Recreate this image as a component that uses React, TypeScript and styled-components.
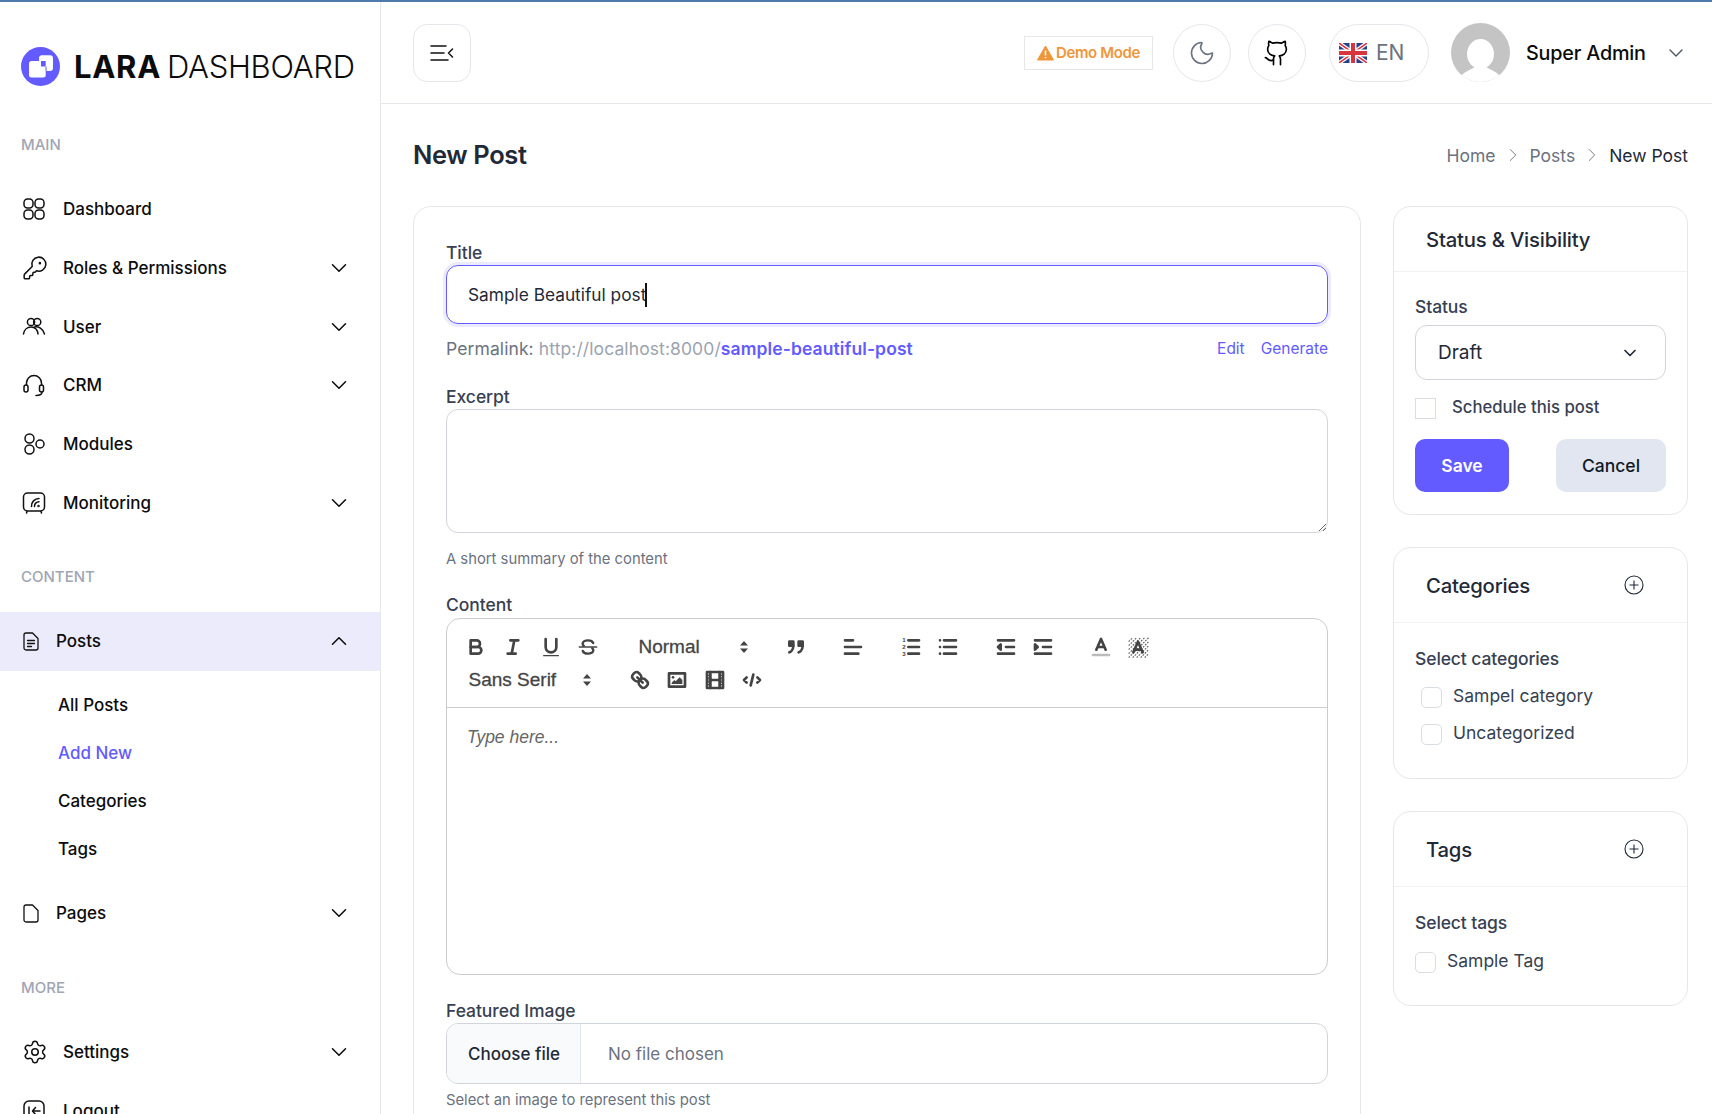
import { FC, ReactNode } from "react";
import styled, { createGlobalStyle } from "styled-components";
import { ChevronDown, ChevronUp, KeyRound, Settings, Moon, ChevronRight } from "lucide-react";

const FONT = `Inter, "Noto Sans", sans-serif`;
const PRIMARY = "#635bff";

const GlobalStyle = createGlobalStyle`
  html, body {
    margin: 0;
    padding: 0;
    height: 100%;
    background: #fff;
    font-family: ${FONT};
  }
  * { box-sizing: border-box; }
`;

const Shell = styled.div`
  display: grid;
  grid-template-columns: 381px 1fr;
  height: 1114px;
  overflow: hidden;
  border-top: 2px solid #4f78ab;
`;

// sidebar
const Sidebar = styled.aside`
  border-right: 1px solid #e5e7eb;
  overflow: hidden;
`;

const Brand = styled.div`
  display: flex;
  align-items: center;
  gap: 14px;
  height: 128px;
  padding: 0 0 0 21px;
`;

const BrandText = styled.div`
  font-size: 31px;
  line-height: 1;
  color: #0c0c0c;
  font-weight: 300;
  letter-spacing: -0.3px;
  white-space: nowrap;
  & b {
    font-weight: 700;
    margin-right: 6px;
    letter-spacing: 0.7px;
  }
`;

const SectionLabel = styled.div<{ $top: number; $bottom: number }>`
  height: 20px;
  line-height: 20px;
  margin: ${(p) => p.$top}px 0 ${(p) => p.$bottom}px;
  padding-left: 21px;
  font-size: 15px;
  font-weight: 500;
  color: #a0a6b4;
`;

const NavRow = styled.div<{ $active?: boolean; $small?: boolean }>`
  display: flex;
  align-items: center;
  height: 58.7px;
  padding: 0 28px 0 ${(p) => (p.$small ? 23 : 22)}px;
  background: ${(p) => (p.$active ? "#ebebfb" : "transparent")};
  color: #0c0c0c;
`;

const NavIcon = styled.span<{ $small?: boolean }>`
  display: flex;
  width: ${(p) => (p.$small ? 33 : 41)}px;
  flex: none;
  color: #111;
`;

const NavText = styled.span`
  flex: 1;
  font-size: 17px;
  font-weight: 500;
`;

const SubNav = styled.div`
  display: flex;
  flex-direction: column;
  padding: 10px 0 11px 58px;
`;

const SubItem = styled.div<{ $current?: boolean }>`
  height: 48px;
  line-height: 48px;
  font-size: 17px;
  font-weight: 500;
  color: ${(p) => (p.$current ? PRIMARY : "#0c0c0c")};
`;

// header
const Content = styled.main`
  min-width: 0;
`;

const Header = styled.header`
  display: flex;
  align-items: center;
  justify-content: space-between;
  height: 102px;
  padding: 0 24px 0 32px;
  border-bottom: 1px solid #e5e7eb;
`;

const ToggleButton = styled.div`
  display: flex;
  align-items: center;
  justify-content: center;
  width: 58px;
  height: 58px;
  border: 1px solid #e5e7eb;
  border-radius: 14px;
`;

const HeaderRight = styled.div`
  display: flex;
  align-items: center;
`;

const DemoBadge = styled.div`
  display: flex;
  align-items: center;
  gap: 2px;
  width: 129px;
  height: 34px;
  justify-content: center;
  margin-right: 20px;
  border: 1px solid #e5e7eb;
  color: #f0963a;
  font-size: 15px;
  font-weight: 600;
  letter-spacing: -0.35px;
  white-space: nowrap;
`;

const RoundButton = styled.div<{ $right: number }>`
  display: flex;
  align-items: center;
  justify-content: center;
  width: 58px;
  height: 58px;
  margin-right: ${(p) => p.$right}px;
  border: 1px solid #e5e7eb;
  border-radius: 50%;
`;

const LangButton = styled.div`
  display: flex;
  align-items: center;
  gap: 9px;
  width: 100px;
  height: 58px;
  padding-left: 9px;
  margin-right: 22px;
  border: 1px solid #e5e7eb;
  border-radius: 29px;
  font-size: 21px;
  color: #6b7280;
`;

const UserName = styled.div`
  margin: 0 16px;
  width: 122px;
  font-size: 19.8px;
  font-weight: 500;
  letter-spacing: -0.2px;
  color: #0c0c0c;
  white-space: nowrap;
`;

// page
const Page = styled.div`
  padding: 31px 24px 0 32px;
`;

const TitleRow = styled.div`
  display: flex;
  align-items: center;
  justify-content: space-between;
  height: 40px;
  margin-bottom: 31px;
`;

const PageTitle = styled.h1`
  margin: -2px 0 0;
  font-size: 25.5px;
  font-weight: 600;
  letter-spacing: -0.4px;
  color: #1f2937;
`;

const Breadcrumb = styled.div`
  display: flex;
  align-items: center;
  font-size: 17.5px;
  color: #6b7280;
  & svg {
    margin: 0 6px;
  }
  & strong {
    font-weight: 400;
    color: #1f2937;
  }
`;

const Columns = styled.div`
  display: grid;
  grid-template-columns: 948px 295px;
  gap: 32px;
  align-items: start;
`;

const MainCard = styled.section`
  padding: 36px 32px 60px;
  border: 1px solid #e5e7eb;
  border-radius: 18px;
`;

const FieldLabel = styled.label<{ $top?: number }>`
  display: block;
  height: 20px;
  line-height: 20px;
  margin: ${(p) => p.$top ?? 0}px 0 2px;
  font-size: 17.5px;
  font-weight: 500;
  letter-spacing: -0.05px;
  color: #374151;
`;

const TitleInput = styled.div`
  display: flex;
  align-items: center;
  height: 59px;
  padding: 0 21px;
  border: 1px solid ${PRIMARY};
  border-radius: 12px;
  box-shadow: 0 0 0 3px #ecebfd;
  font-size: 17.3px;
  color: #1f2937;
`;

const Caret = styled.span`
  width: 2px;
  height: 24px;
  background: #111;
  margin-left: -1px;
`;

const PermalinkRow = styled.div`
  display: flex;
  justify-content: space-between;
  align-items: center;
  height: 20px;
  margin: 14px 0 29px;
  font-size: 17.5px;
  letter-spacing: 0.1px;
  color: #6b7280;
  & em {
    font-style: normal;
    color: #9ca3af;
  }
  & b {
    font-weight: 600;
    color: ${PRIMARY};
  }
`;

const LinkGroup = styled.div`
  display: flex;
  gap: 16px;
  font-size: 15.5px;
  letter-spacing: 0;
  color: ${PRIMARY};
`;

const Excerpt = styled.textarea`
  display: block;
  width: 100%;
  height: 124px;
  border: 1px solid #d1d5db;
  border-radius: 12px;
  outline: none;
  background: #fff;
`;

const Hint = styled.div<{ $top: number }>`
  height: 20px;
  line-height: 20px;
  margin-top: ${(p) => p.$top}px;
  font-size: 14.8px;
  color: #6b7280;
`;

const Editor = styled.div`
  height: 357px;
  margin-top: 3px;
  border: 1px solid #ccc;
  border-radius: 14px;
  overflow: hidden;
`;

const Toolbar = styled.div`
  height: 89px;
  padding: 11px 0 0 10px;
  border-bottom: 1px solid #ccc;
`;

const ToolRow = styled.div`
  display: flex;
  align-items: center;
  height: 33px;
`;

const ToolGroup = styled.div`
  display: flex;
  margin-right: 20px;
`;

const ToolButton = styled.span`
  display: flex;
  align-items: center;
  justify-content: center;
  width: 37.5px;
  height: 33px;
`;

const Picker = styled.div<{ $width: number; $pad: number; $label: number; $right: number }>`
  display: flex;
  align-items: center;
  flex: none;
  width: ${(p) => p.$width}px;
  padding-left: ${(p) => p.$pad}px;
  margin-right: ${(p) => p.$right}px;
  font-family: "Liberation Sans", Arial, sans-serif;
  font-size: 19px;
  color: #444;
  -webkit-text-stroke: 0.3px #444;
  & > span {
    width: ${(p) => p.$label}px;
  }
`;

const EditorBody = styled.div`
  padding: 17px 20px;
  font-family: "Liberation Sans", Arial, sans-serif;
  font-size: 17.5px;
  font-style: italic;
  line-height: 24px;
  color: #666;
`;

const FileInput = styled.div`
  display: flex;
  height: 61px;
  border: 1px solid #d1d5db;
  border-radius: 12px;
  overflow: hidden;
  align-items: stretch;
  font-size: 17px;
`;

const FileButton = styled.div`
  display: flex;
  align-items: center;
  padding-left: 21px;
  width: 134px;
  background: #f9fafb;
  border-right: 1px solid #e5e7eb;
  font-weight: 500;
  color: #1f2937;
`;

const FileName = styled.div`
  display: flex;
  align-items: center;
  padding-left: 27px;
  color: #6b7280;
`;

// right column
const SideColumn = styled.div`
  display: flex;
  flex-direction: column;
  gap: 32px;
`;

const SideCard = styled.section`
  border: 1px solid #e5e7eb;
  border-radius: 18px;
  overflow: hidden;
`;

const SideHeader = styled.div<{ $height: number }>`
  display: flex;
  align-items: center;
  justify-content: space-between;
  height: ${(p) => p.$height}px;
  padding: 0 43px 0 32px;
  border-bottom: 1px solid #f1f2f4;
  font-size: 20.3px;
  font-weight: 500;
  letter-spacing: -0.2px;
  color: #1f2937;
`;

const SideBody = styled.div<{ $top: number; $bottom: number }>`
  padding: ${(p) => p.$top}px 21px ${(p) => p.$bottom}px 21px;
`;

const SideLabel = styled.div<{ $bottom: number }>`
  height: 20px;
  line-height: 20px;
  margin-bottom: ${(p) => p.$bottom}px;
  font-size: 17.5px;
  font-weight: 500;
  letter-spacing: -0.1px;
  color: #374151;
`;

const SelectBox = styled.div`
  display: flex;
  align-items: center;
  justify-content: space-between;
  height: 55px;
  padding: 0 25px 0 22px;
  border: 1px solid #d1d5db;
  border-radius: 12px;
  font-size: 19px;
  color: #1f2937;
`;

const CheckRow = styled.div<{ $indent?: number; $gap: number; $height?: number; $size?: number; $weight?: number }>`
  display: flex;
  align-items: center;
  gap: ${(p) => p.$gap}px;
  height: ${(p) => p.$height ?? 37}px;
  padding-left: ${(p) => p.$indent ?? 0}px;
  font-size: ${(p) => p.$size ?? 17.5}px;
  font-weight: ${(p) => p.$weight ?? 400};
  color: #374151;
`;

const CheckBox = styled.span<{ $square?: boolean }>`
  flex: none;
  width: 21px;
  height: 21px;
  margin-top: 3px;
  border: 1px solid #dadde2;
  border-radius: ${(p) => (p.$square ? 0 : 5)}px;
`;

const ScheduleRow = styled.div`
  margin: 7px 0 12px;
`;

const Actions = styled.div`
  display: flex;
  justify-content: space-between;
`;

const ActionButton = styled.div<{ $primary?: boolean; $width: number }>`
  display: flex;
  align-items: center;
  justify-content: center;
  width: ${(p) => p.$width}px;
  height: 53px;
  border-radius: 10px;
  background: ${(p) => (p.$primary ? PRIMARY : "#e2e6f0")};
  color: ${(p) => (p.$primary ? "#fff" : "#111827")};
  font-size: 17.5px;
  font-weight: ${(p) => (p.$primary ? 600 : 500)};
`;

// drawn icons
const Svg: FC<{ size?: number; box?: number; w?: number; children: ReactNode }> = ({ size = 24, box = 24, w = 1.5, children }) => (
  <svg width={size} height={size} viewBox={`0 0 ${box} ${box}`} fill="none" stroke="currentColor" strokeWidth={w} strokeLinecap="round" strokeLinejoin="round">
    {children}
  </svg>
);

const LogoMark = () => (
  <svg width="39" height="39" viewBox="0 0 39 39">
    <circle cx="19.5" cy="19.5" r="19.5" fill={PRIMARY} />
    <rect x="18" y="8.3" width="14" height="15.7" rx="3" fill="#fff" />
    <rect x="8" y="14" width="16.7" height="16.6" rx="2.5" fill="#fff" />
    <rect x="20" y="14" width="4.7" height="5.5" fill={PRIMARY} />
    <rect x="24.5" y="19.5" width="1" height="4.5" fill={PRIMARY} />
  </svg>
);

const DashIcon = () => (
  <Svg size={24}>
    <rect x="2" y="2" width="9" height="9" rx="3.5" />
    <rect x="13" y="2" width="9" height="9" rx="3.5" />
    <rect x="2" y="13" width="9" height="9" rx="3.5" />
    <rect x="13" y="13" width="9" height="9" rx="3.5" />
  </Svg>
);

const UsersIcon = () => (
  <Svg size={24}>
    <circle cx="9" cy="7" r="3.6" />
    <circle cx="15.2" cy="7" r="3.6" />
    <path d="M1.5 19c.6-4 3.600-7 7.500-7s6.500 3 7 7" />
    <path d="M12.500 12c3.800-.8 8.500 1.500 10 7" />
  </Svg>
);

const HeadsetIcon = () => (
  <Svg size={24}>
    <path d="M4.500 12V10a7.500 7.500 0 0 1 15 0v2" />
    <rect x="2" y="12" width="4" height="7" rx="2" />
    <rect x="17.500" y="12" width="4" height="7" rx="2" />
    <path d="M20 19c0 2.500-2.500 3.500-6 3.500" />
  </Svg>
);

const ModulesIcon = () => (
  <Svg size={24}>
    <circle cx="7.500" cy="6.500" r="4.500" />
    <circle cx="7.500" cy="17.500" r="4.500" />
    <circle cx="18" cy="12" r="4" />
  </Svg>
);

const MonitorIcon = () => (
  <Svg size={24}>
    <rect x="1.500" y="2" width="21" height="18" rx="4" />
    <path d="M5 20.500l-.5 1.500M19 20.500l.5 1.500" />
    <path d="M9.500 15.500a7.500 7.500 0 0 1 7.500-8" />
    <path d="M12.500 15.500a4.500 4.500 0 0 1 4.500-4.800" />
    <circle cx="16.500" cy="15" r=".5" />
  </Svg>
);

const DocIcon = () => (
  <svg width="16" height="19" viewBox="0 0 16 19" fill="none" stroke="currentColor" strokeWidth="1.300" strokeLinejoin="round" strokeLinecap="round">
    <path d="M3 1h6.500L15 6.500V16a2 2 0 0 1-2 2H3a2 2 0 0 1-2-2V3a2 2 0 0 1 2-2Z" />
    <path d="M4.500 8.500h7M4.500 11.500h7M4.500 14.500h4" />
  </svg>
);

const PageIcon = () => (
  <svg width="16" height="19" viewBox="0 0 16 19" fill="none" stroke="currentColor" strokeWidth="1.300" strokeLinejoin="round">
    <path d="M3 1h6.500L15 6.500V16a2 2 0 0 1-2 2H3a2 2 0 0 1-2-2V3a2 2 0 0 1 2-2Z" />
  </svg>
);

const LogoutIcon = () => (
  <Svg size={24}>
    <rect x="2" y="2" width="20" height="20" rx="5" />
    <path d="M7 8v8M18 12h-7M13.500 8.500L10.500 12l3 3.500" />
  </Svg>
);

const MenuIcon = () => (
  <svg width="24" height="18" viewBox="0 0 24 18" fill="none" stroke="#111" strokeWidth="1.500" strokeLinecap="round" strokeLinejoin="round">
    <path d="M1 2h15M1 9h13M1 16h17M22.500 5L18.500 9l4 4" />
  </svg>
);

const WarningIcon = () => (
  <svg width="17" height="16" viewBox="0 0 17 16">
    <path d="M8.500 1L16.500 15H.5Z" fill="#f0963a" stroke="#f0963a" strokeWidth="1" strokeLinejoin="round" />
    <path d="M8.500 5.500v5M8.500 12v1.300" stroke="#fff" strokeWidth="1.500" />
  </svg>
);

const GithubIcon = () => (
  <Svg size={28} w={1.400}>
    <path d="M15 22v-4a4.800 4.800 0 0 0-1-3.500c3 0 6-2 6-5.500.08-1.250-.27-2.480-1-3.500.28-1.150.28-2.350 0-3.500 0 0-1 0-3 1.500-2.640-.5-5.360-.5-8 0C6 2 5 2 5 2c-.3 1.150-.3 2.350 0 3.500A5.403 5.403 0 0 0 4 9c0 3.500 3 5.500 6 5.500-.39.49-.68 1.050-.85 1.650-.17.6-.22 1.230-.15 1.850v4" />
    <path d="M9 18c-4.510 2-5-2-7-2" />
  </Svg>
);

const UkFlag = () => (
  <svg width="28" height="20" viewBox="0 0 28 20">
    <rect width="28" height="20" rx="2" fill="#27408b" />
    <path d="M0 0l28 20M28 0L0 20" stroke="#fff" strokeWidth="4" />
    <path d="M0 0l28 20M28 0L0 20" stroke="#d8353f" strokeWidth="1.500" />
    <path d="M14 0v20M0 10h28" stroke="#fff" strokeWidth="7" />
    <path d="M14 0v20M0 10h28" stroke="#d8353f" strokeWidth="4" />
  </svg>
);

const Avatar = () => (
  <svg width="59" height="59" viewBox="0 0 59 59">
    <defs>
      <clipPath id="avatar-clip">
        <circle cx="29.500" cy="29.500" r="29.500" />
      </clipPath>
    </defs>
    <g clipPath="url(#avatar-clip)">
      <rect width="59" height="59" fill="#c4c4c4" />
      <ellipse cx="29.500" cy="31" rx="13.500" ry="15" fill="#fff" />
      <path d="M6 60c2-9 11-12 18-16h11c7 4 16 7 18 16Z" fill="#fff" />
    </g>
  </svg>
);

const PlusCircle = () => (
  <svg width="20" height="20" viewBox="0 0 20 20" fill="none" stroke="#1f2937" strokeWidth="1.100">
    <circle cx="10" cy="10" r="9" />
    <path d="M10 5.500v9M5.500 10h9" />
  </svg>
);

const Quill: FC<{ children: ReactNode }> = ({ children }) => (
  <svg width="24" height="24" viewBox="0 0 18 18" fill="none" stroke="#444" strokeWidth="2" strokeLinecap="round" strokeLinejoin="round">
    {children}
  </svg>
);

const PickerArrows = () => (
  <svg width="14" height="18" viewBox="0 0 14 18" fill="#444" stroke="none">
    <path d="M3 7.500L7 3l4 4.500ZM3 10.500h8L7 15Z" />
  </svg>
);

const FILL = { fill: "#444", stroke: "none" };

const Numeral = styled.text`
  font-family: "Liberation Sans", Arial, sans-serif;
  font-size: 4.6px;
  font-weight: 700;
  fill: #444;
  stroke: none;
`;

const tools = {
  bold: (
    <Quill>
      <path d="M5,4H9.500A2.500,2.500,0,0,1,12,6.500v0A2.500,2.500,0,0,1,9.500,9H5V4Z" />
      <path d="M5,9h5.500A2.500,2.500,0,0,1,13,11.500v0A2.500,2.500,0,0,1,10.500,14H5V9Z" />
    </Quill>
  ),
  italic: (
    <Quill>
      <path d="M7 4h6M5 14h6M8 14l2-10" />
    </Quill>
  ),
  underline: (
    <Quill>
      <path d="M5,3V9a4,4,0,0,0,4,4H9a4,4,0,0,0,4-4V3" />
      <rect height="1" rx=".5" width="12" x="3" y="15" {...FILL} />
    </Quill>
  ),
  strike: (
    <Quill>
      <path d="M15.500 9h-13" strokeWidth="1.200" />
      <path d="M12.900 6C12.400 4.600 10.800 4 9 4 6.800 4 5 5 5 6.500c0 .7.300 1.200.8 1.600" strokeWidth="1.800" />
      <path d="M5.100 12C5.600 13.400 7.200 14 9 14c2.200 0 4-1 4-2.500 0-.7-.3-1.200-.8-1.600" strokeWidth="1.800" />
    </Quill>
  ),
  quote: (
    <Quill>
      <rect height="3" width="3" x="4" y="5" fill="#444" />
      <rect height="3" width="3" x="11" y="5" fill="#444" />
      <path d="M7,8c0,4.031-3,5-3,5" />
      <path d="M14,8c0,4.031-3,5-3,5" />
    </Quill>
  ),
  align: (
    <Quill>
      <path d="M3 9h12M3 14h10M3 4h6" />
    </Quill>
  ),
  ordered: (
    <Quill>
      <path d="M7 4h8M7 9h8M7 14h8" />
      <Numeral x="2.500" y="5.600">1</Numeral>
      <Numeral x="2.500" y="10.600">2</Numeral>
      <Numeral x="2.500" y="15.600">3</Numeral>
    </Quill>
  ),
  bullet: (
    <Quill>
      <path d="M6 4h9M6 9h9M6 14h9M3 4h.01M3 9h.01M3 14h.01" />
    </Quill>
  ),
  outdent: (
    <Quill>
      <path d="M3 14h12M3 4h12M9 9h6" />
      <polygon points="5 7 5 11 3 9 5 7" fill="#444" />
    </Quill>
  ),
  indent: (
    <Quill>
      <path d="M3 14h12M3 4h12M9 9h6" />
      <polygon points="3 7 3 11 5 9 3 7" fill="#444" />
    </Quill>
  ),
  color: (
    <Quill>
      <path d="M3 15h12" stroke="#bbb" />
      <path d="M5.500 11L9 3l3.500 8M11.630 9H6.380" />
    </Quill>
  ),
  background: (
    <Quill>
      <path
        d="M2 5l3-3M2 8l6-6M2 11l9-9M2 14l12-12M2 17L17 2M5 17L17 5M8 17l9-9M11 17l6-6M14 17l3-3"
        strokeWidth=".9"
        strokeDasharray="1.300 .9"
        strokeLinecap="butt"
        stroke="#666"
      />
      <path d="M5.500 13L9 5l3.500 8M11.630 11H6.380" />
    </Quill>
  ),
  link: (
    <Quill>
      <path d="M7 7l4 4" />
      <path d="M8.900,4.577a3.476,3.476,0,0,1,.36,4.679A3.476,3.476,0,0,1,4.577,8.900C3.185,7.500,2.035,6.400,4.217,4.217S7.500,3.185,8.900,4.577Z" />
      <path d="M13.423,9.100a3.476,3.476,0,0,0-4.679-.36,3.476,3.476,0,0,0,.36,4.679c1.392,1.392,2.500,2.542,4.679.36S14.815,10.500,13.423,9.100Z" />
    </Quill>
  ),
  image: (
    <Quill>
      <rect height="10" width="12" x="3" y="4" />
      <circle cx="6" cy="7" r="1" {...FILL} />
      <polygon points="5 12 5 11 7 9 8 10 11 7 13 9 13 12 5 12" {...FILL} />
    </Quill>
  ),
  video: (
    <Quill>
      <rect height="12" width="12" x="3" y="3" />
      <path d="M5.500 3v12M12.500 3v12M5 9h8" />
      <path d="M3 5.500h3M3 7.500h3M3 10.500h3M3 12.500h3M12 5.500h3M12 7.500h3M12 10.500h3M12 12.500h3" strokeWidth="1" />
    </Quill>
  ),
  code: (
    <Quill>
      <path d="M5 7L3 9l2 2M13 7l2 2-2 2M10 5l-2 8" />
    </Quill>
  ),
};

type NavEntry = { label: string; icon: ReactNode; arrow?: boolean };

const mainNav: NavEntry[] = [
  { label: "Dashboard", icon: <DashIcon /> },
  { label: "Roles & Permissions", icon: <KeyRound size={26} strokeWidth={1.4} />, arrow: true },
  { label: "User", icon: <UsersIcon />, arrow: true },
  { label: "CRM", icon: <HeadsetIcon />, arrow: true },
  { label: "Modules", icon: <ModulesIcon /> },
  { label: "Monitoring", icon: <MonitorIcon />, arrow: true },
];

const subItems = ["All Posts", "Add New", "Categories", "Tags"];

const Row: FC<NavEntry> = ({ label, icon, arrow }) => (
  <NavRow>
    <NavIcon>{icon}</NavIcon>
    <NavText>{label}</NavText>
    {arrow && <ChevronDown size={26} strokeWidth={1.4} />}
  </NavRow>
);

const Tool: FC<{ children: ReactNode }> = ({ children }) => <ToolButton>{children}</ToolButton>;

const App: FC = () => (
  <>
    <GlobalStyle />
    <Shell>
      <Sidebar>
        <Brand>
          <LogoMark />
          <BrandText>
            <b>LARA</b>DASHBOARD
          </BrandText>
        </Brand>
        <SectionLabel $top={5} $bottom={25}>MAIN</SectionLabel>
        {mainNav.map((item) => (
          <Row key={item.label} {...item} />
        ))}
        <SectionLabel $top={35} $bottom={25}>CONTENT</SectionLabel>
        <NavRow $active $small>
          <NavIcon $small><DocIcon /></NavIcon>
          <NavText>Posts</NavText>
          <ChevronUp size={26} strokeWidth={1.4} />
        </NavRow>
        <SubNav>
          {subItems.map((s) => (
            <SubItem key={s} $current={s === "Add New"}>{s}</SubItem>
          ))}
        </SubNav>
        <NavRow $small>
          <NavIcon $small><PageIcon /></NavIcon>
          <NavText>Pages</NavText>
          <ChevronDown size={26} strokeWidth={1.4} />
        </NavRow>
        <SectionLabel $top={35} $bottom={25}>MORE</SectionLabel>
        <Row label="Settings" icon={<Settings size={26} strokeWidth={1.4} />} arrow />
        <Row label="Logout" icon={<LogoutIcon />} />
      </Sidebar>

      <Content>
        <Header>
          <ToggleButton><MenuIcon /></ToggleButton>
          <HeaderRight>
            <DemoBadge>
              <WarningIcon />
              Demo Mode
            </DemoBadge>
            <RoundButton $right={17}><Moon size={28} color="#6b7280" strokeWidth={1.4} /></RoundButton>
            <RoundButton $right={23}><GithubIcon /></RoundButton>
            <LangButton><UkFlag />EN</LangButton>
            <Avatar />
            <UserName>Super Admin</UserName>
            <ChevronDown size={24} color="#4b5563" strokeWidth={1.4} />
          </HeaderRight>
        </Header>

        <Page>
          <TitleRow>
            <PageTitle>New Post</PageTitle>
            <Breadcrumb>
              Home
              <ChevronRight size={22} strokeWidth={1} />
              Posts
              <ChevronRight size={22} strokeWidth={1} />
              <strong>New Post</strong>
            </Breadcrumb>
          </TitleRow>

          <Columns>
            <MainCard>
              <FieldLabel>Title</FieldLabel>
              <TitleInput>Sample Beautiful post<Caret /></TitleInput>
              <PermalinkRow>
                <span>Permalink: <em>http://localhost:8000/</em><b>sample-beautiful-post</b></span>
                <LinkGroup><span>Edit</span><span>Generate</span></LinkGroup>
              </PermalinkRow>

              <FieldLabel>Excerpt</FieldLabel>
              <Excerpt />
              <Hint $top={16}>A short summary of the content</Hint>

              <FieldLabel $top={26}>Content</FieldLabel>
              <Editor>
                <Toolbar>
                  <ToolRow>
                    <ToolGroup>
                      <Tool>{tools.bold}</Tool>
                      <Tool>{tools.italic}</Tool>
                      <Tool>{tools.underline}</Tool>
                      <Tool>{tools.strike}</Tool>
                    </ToolGroup>
                    <Picker $width={150} $pad={11.5} $label={98} $right={0}>
                      <span>Normal</span>
                      <PickerArrows />
                    </Picker>
                    <ToolGroup>
                      <Tool>{tools.quote}</Tool>
                    </ToolGroup>
                    <ToolGroup><Tool>{tools.align}</Tool></ToolGroup>
                    <ToolGroup>
                      <Tool>{tools.ordered}</Tool>
                      <Tool>{tools.bullet}</Tool>
                    </ToolGroup>
                    <ToolGroup>
                      <Tool>{tools.outdent}</Tool>
                      <Tool>{tools.indent}</Tool>
                    </ToolGroup>
                    <ToolGroup>
                      <Tool>{tools.color}</Tool>
                      <Tool>{tools.background}</Tool>
                    </ToolGroup>
                  </ToolRow>
                  <ToolRow>
                    <Picker $width={144} $pad={11.5} $label={111} $right={20}>
                      <span>Sans Serif</span>
                      <PickerArrows />
                    </Picker>
                    <ToolGroup>
                      <Tool>{tools.link}</Tool>
                      <Tool>{tools.image}</Tool>
                      <Tool>{tools.video}</Tool>
                      <Tool>{tools.code}</Tool>
                    </ToolGroup>
                  </ToolRow>
                </Toolbar>
                <EditorBody>Type here...</EditorBody>
              </Editor>

              <FieldLabel $top={26}>Featured Image</FieldLabel>
              <FileInput>
                <FileButton>Choose file</FileButton>
                <FileName>No file chosen</FileName>
              </FileInput>
              <Hint $top={6}>Select an image to represent this post</Hint>
            </MainCard>

            <SideColumn>
              <SideCard>
                <SideHeader $height={65}>Status &amp; Visibility</SideHeader>
                <SideBody $top={25} $bottom={22}>
                  <SideLabel $bottom={8}>Status</SideLabel>
                  <SelectBox>Draft<ChevronDown size={20} strokeWidth={2} /></SelectBox>
                  <ScheduleRow>
                    <CheckRow $gap={16} $height={40} $size={16.7} $weight={500}>
                      <CheckBox $square />
                      Schedule this post
                    </CheckRow>
                  </ScheduleRow>
                  <Actions>
                    <ActionButton $primary $width={94}>Save</ActionButton>
                    <ActionButton $width={110}>Cancel</ActionButton>
                  </Actions>
                </SideBody>
              </SideCard>

              <SideCard>
                <SideHeader $height={75}>Categories<PlusCircle /></SideHeader>
                <SideBody $top={26} $bottom={27}>
                  <SideLabel $bottom={8}>Select categories</SideLabel>
                  <CheckRow $indent={6} $gap={11}><CheckBox />Sampel category</CheckRow>
                  <CheckRow $indent={6} $gap={11}><CheckBox />Uncategorized</CheckRow>
                </SideBody>
              </SideCard>

              <SideCard>
                <SideHeader $height={75}>Tags<PlusCircle /></SideHeader>
                <SideBody $top={26} $bottom={26}>
                  <SideLabel $bottom={9}>Select tags</SideLabel>
                  <CheckRow $gap={11}><CheckBox />Sample Tag</CheckRow>
                </SideBody>
              </SideCard>
            </SideColumn>
          </Columns>
        </Page>
      </Content>
    </Shell>
  </>
);

export default App;
